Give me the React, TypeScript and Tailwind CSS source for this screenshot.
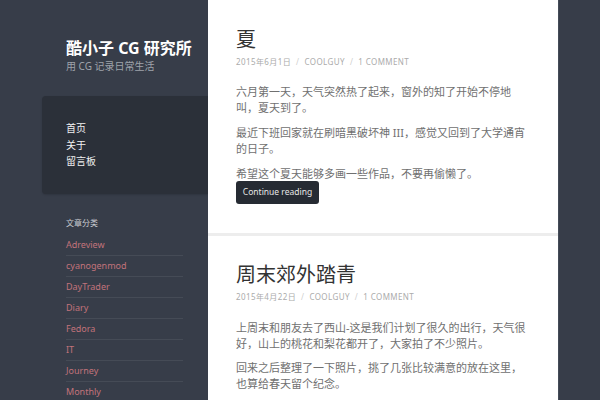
const cats = ["Adreview", "cyanogenmod", "DayTrader", "Diary", "Fedora", "IT", "Journey", "Monthly"];

function Meta({ date }: { date: string }) {
  return (
    <div className="mt-[5px] text-[8px] leading-[10px] uppercase tracking-[0.05em] text-[#ababab]">
      {date}
      <span className="mx-[5px] text-[#cfcfcf]">/</span>
      coolguy
      <span className="mx-[5px] text-[#cfcfcf]">/</span>1 Comment
    </div>
  );
}

export default function App() {
  return (
    <div className="flex h-[400px] w-[600px] overflow-hidden bg-[#373d49] font-[family-name:'Noto_Sans','Noto_Sans_CJK_SC',sans-serif]">
      <aside className="w-[208px] shrink-0">
        <header className="pl-[66px] pt-[39px]">
          <h1 className="text-[16px] font-bold leading-[18px] text-white">酷小子 CG 研究所</h1>
          <p className="mt-[3px] text-[10px] leading-[12px] text-[#9fa3ab]">用 CG 记录日常生活</p>
        </header>
        <nav className="ml-[42px] mt-[24px] h-[98px] rounded-l-[4px] bg-[#2b3039] pl-[24px] pt-[24px] shadow-[0_1px_2px_rgba(0,0,0,0.15)]">
          <ul className="text-[10px] leading-[16.7px] text-[#f2f2f2]">
            <li>首页</li>
            <li>关于</li>
            <li>留言板</li>
          </ul>
        </nav>
        <section className="ml-[66px] mt-[22.7px] w-[117px]">
          <h2 className="text-[8px] leading-[12px] text-[#c9ccd1]">文章分类</h2>
          <ul className="mt-[6px]">
            {cats.map((c) => (
              <li key={c} className="flex h-[21px] items-center border-b border-[#454b56] text-[9px] text-[#c2737b]">
                {c}
              </li>
            ))}
          </ul>
        </section>
      </aside>
      <main className="w-[350px] shrink-0 bg-white">
        <article className="border-b-[3px] border-[#ededed] px-[28px] pb-[29px] pt-[28px]">
          <h2 className="text-[20px] leading-[24px] text-[#333333]">夏</h2>
          <Meta date="2015年6月1日" />
          <div className="text-[11px] leading-[15.5px] text-[#707070]">
            <p className="mt-[17px]">六月第一天，天气突然热了起来，窗外的知了开始不停地叫，夏天到了。</p>
            <p className="mt-[10px]">最近下班回家就在刷暗黑破坏神 III，感觉又回到了大学通宵的日子。</p>
            <p className="mt-[9.5px]">希望这个夏天能够多画一些作品，不要再偷懒了。</p>
          </div>
          <button className="flex h-[23px] w-[83px] items-center justify-center rounded-[3px] bg-[#262b33] text-[8.5px] text-[#e6e6e6]">
            Continue reading
          </button>
        </article>
        <article className="px-[28px] pt-[27px]">
          <h2 className="text-[20px] leading-[24px] text-[#333333]">周末郊外踏青</h2>
          <Meta date="2015年4月22日" />
          <div className="text-[11px] leading-[15.5px] text-[#707070]">
            <p className="mt-[18px]">上周末和朋友去了西山-这是我们计划了很久的出行，天气很好，山上的桃花和梨花都开了，大家拍了不少照片。</p>
            <p className="mt-[9px]">回来之后整理了一下照片，挑了几张比较满意的放在这里，也算给春天留个纪念。</p>
          </div>
        </article>
      </main>
      <div className="flex-1 border-l border-[#454c58]" />
    </div>
  );
}
